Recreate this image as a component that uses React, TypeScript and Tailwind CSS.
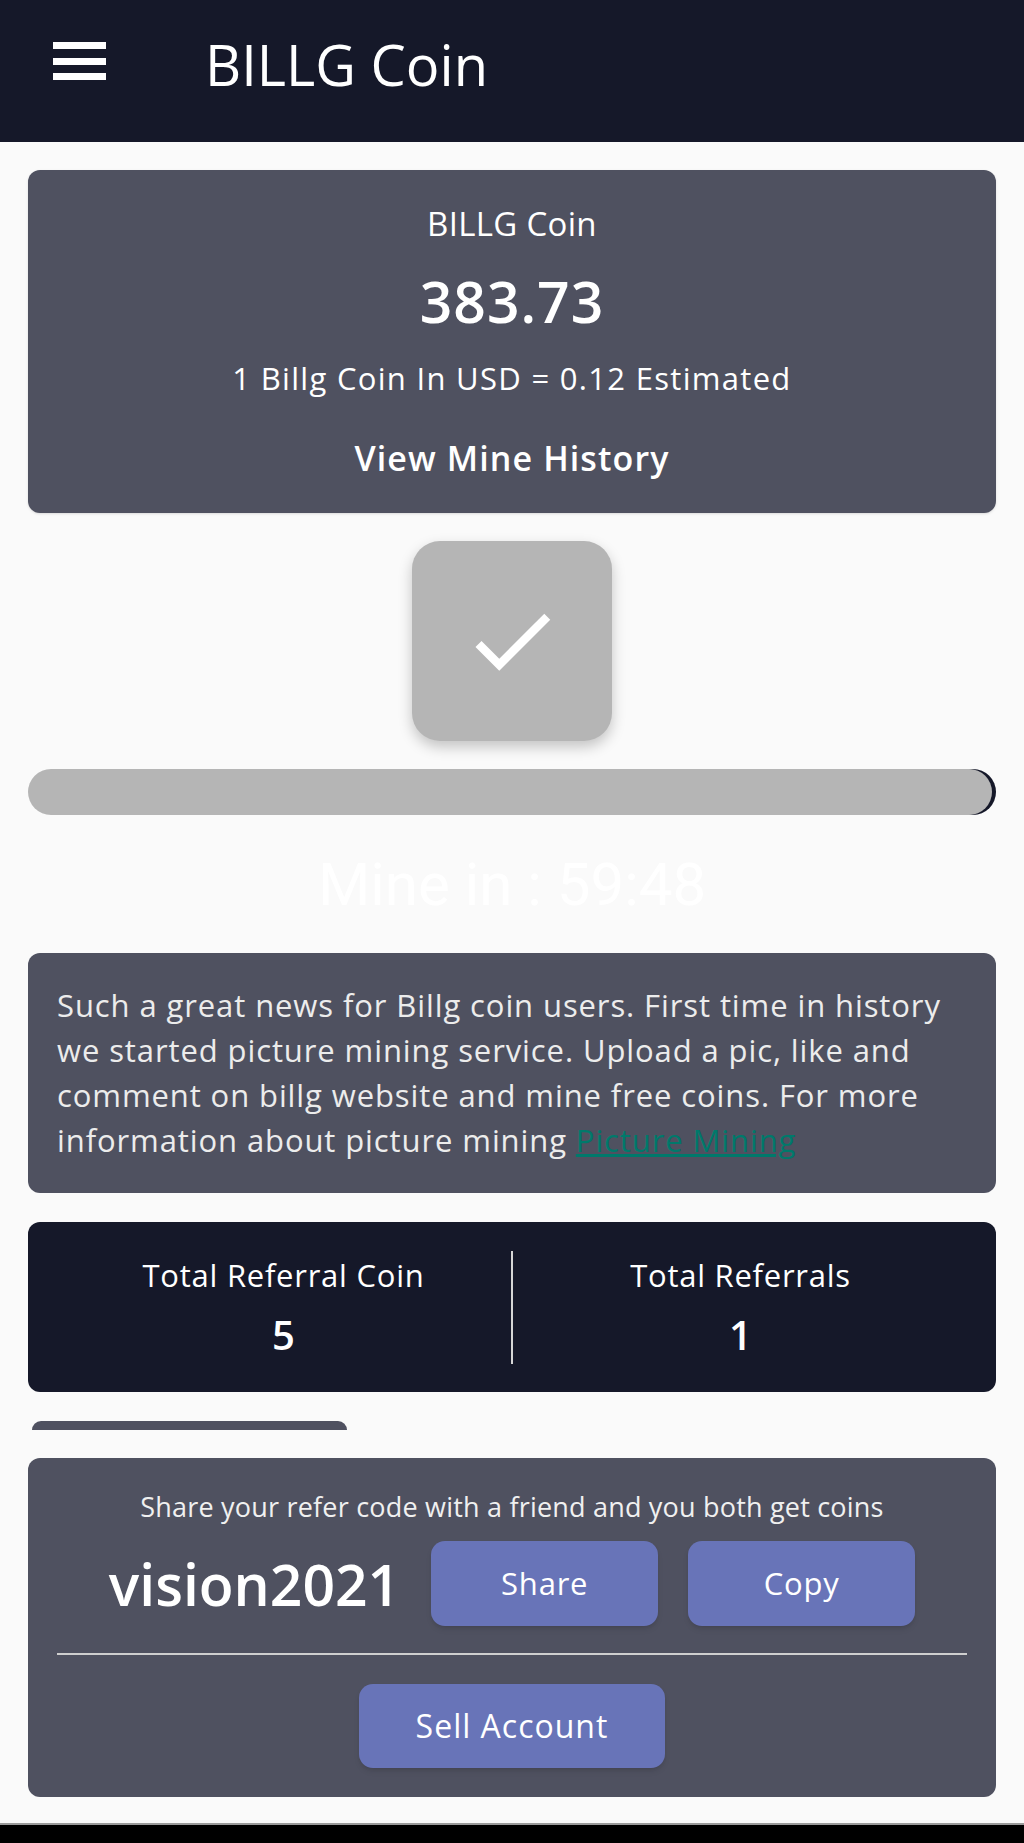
import React from 'react';

const font = { fontFamily: '"Open Sans", "Noto Sans", sans-serif' };

const CheckIcon = () => (
  <svg viewBox="0 0 24 24" width={102} height={102} fill="#ffffff">
    <path d="M9 16.17L4.83 12l-1.42 1.41L9 19 21 7l-1.41-1.41z" />
  </svg>
);

const Header = () => (
  <header className="h-[142px] bg-[#151829] flex items-start pt-[32px] pl-[53px] shrink-0">
    <div className="w-[53px] mt-[10px] flex flex-col gap-[8.5px]">
      <span className="block h-[7px] bg-white" />
      <span className="block h-[7px] bg-white" />
      <span className="block h-[7px] bg-white" />
    </div>
    <h1 className="ml-[99px] text-[56px] leading-[64px] font-normal text-white">BILLG Coin</h1>
  </header>
);

const BalanceCard = () => (
  <section className="mt-[28px] bg-[#4f5160] rounded-[12px] pt-[34px] pb-[33px] flex flex-col items-center text-white shadow-sm">
    <div className="text-[33px] leading-[40px] tracking-[0.3px]">BILLG Coin</div>
    <div className="mt-[25px] text-[57px] leading-[64px] font-semibold tracking-[1px]">383.73</div>
    <div className="mt-[25px] text-[31px] leading-[40px] tracking-[1.3px]">1 Billg Coin In USD = 0.12 Estimated</div>
    <button className="mt-[38px] text-[34px] leading-[44px] font-semibold tracking-[1.1px] text-white">View Mine History</button>
  </section>
);

const MineBlock = () => (
  <>
    <div className="mt-[28px] flex justify-center">
      <button className="w-[200px] h-[200px] rounded-[28px] bg-[#b5b5b5] flex items-center justify-center shadow-[0_6px_14px_rgba(0,0,0,0.22)]">
        <CheckIcon />
      </button>
    </div>
    <div className="mt-[28px] h-[46px] relative">
      <div className="absolute right-0 top-0 h-full w-[46px] rounded-full bg-[#151829]" />
      <div className="relative h-full w-[99.6%] rounded-full bg-[#b5b5b5]" />
    </div>
    <div
      className="mt-[34px] text-center text-[60px] leading-[72px] text-white"
      style={{ fontFamily: 'Roboto, sans-serif' }}
    >
      Mine in : 59:48
    </div>
  </>
);

const NewsCard = () => (
  <section className="mt-[32px] bg-[#4f5160] rounded-[12px] px-[29px] pt-[30px] pb-[30px] text-[31px] leading-[45px] tracking-[0.9px] text-[#ececec]">
    Such a great news for Billg coin users. First time in history we started picture mining service. Upload a pic,
    like and comment on billg website and mine free coins. For more information about picture mining{' '}
    <a href="#" className="text-[#00796b] underline">Picture Mining</a>
  </section>
);

const ReferralStats = () => (
  <section className="mt-[29px] h-[170px] bg-[#151829] rounded-[12px] px-[28px] flex items-center text-white">
    <div className="flex-1 flex flex-col items-center">
      <div className="text-[31px] leading-[40px] tracking-[0.75px]">Total Referral Coin</div>
      <div className="mt-[16px] text-[40px] leading-[48px] font-semibold">5</div>
    </div>
    <div className="w-[2px] h-[113px] bg-[#d6d6d6]" />
    <div className="flex-1 flex flex-col items-center">
      <div className="text-[31px] leading-[40px] tracking-[0.75px]">Total Referrals</div>
      <div className="mt-[16px] text-[40px] leading-[48px] font-semibold">1</div>
    </div>
  </section>
);

const ShareCard = () => (
  <section className="mt-[28px] bg-[#4f5160] rounded-[12px] pt-[31px] pb-[29px] flex flex-col items-center text-white">
    <div className="text-[27px] leading-[36px] tracking-[0.2px] text-[#f0f0f0]">Share your refer code with a friend and you both get coins</div>
    <div className="mt-[16px] flex items-center justify-center">
      <span className="text-[57px] leading-[64px] font-semibold">vision2021</span>
      <button className="ml-[31px] w-[227px] h-[85px] rounded-[14px] bg-[#6874b8] text-[31px] tracking-[0.8px] text-white shadow-md">Share</button>
      <button className="ml-[30px] w-[227px] h-[85px] rounded-[14px] bg-[#6874b8] text-[31px] tracking-[0.8px] text-white shadow-md">Copy</button>
    </div>
    <div className="mt-[27px] self-stretch mx-[29px] h-[2px] bg-[#cfcfcf]" />
    <button className="mt-[29px] w-[306px] h-[84px] rounded-[14px] bg-[#6874b8] text-[32px] tracking-[1px] text-white shadow-md">Sell Account</button>
  </section>
);

export default function App() {
  return (
    <div className="min-h-[1843px] bg-[#fafafa] flex flex-col" style={font}>
      <Header />
      <main className="px-[28px] flex flex-col">
        <BalanceCard />
        <MineBlock />
        <NewsCard />
        <ReferralStats />
        <div className="mt-[29px] ml-[4px] w-[315px] h-[9px] rounded-t-[12px] bg-[#4f5160]" />
        <ShareCard />
      </main>
      <div className="mt-auto h-[20px] border-t-2 border-[#9a9a9a] bg-black shrink-0" />
    </div>
  );
}
